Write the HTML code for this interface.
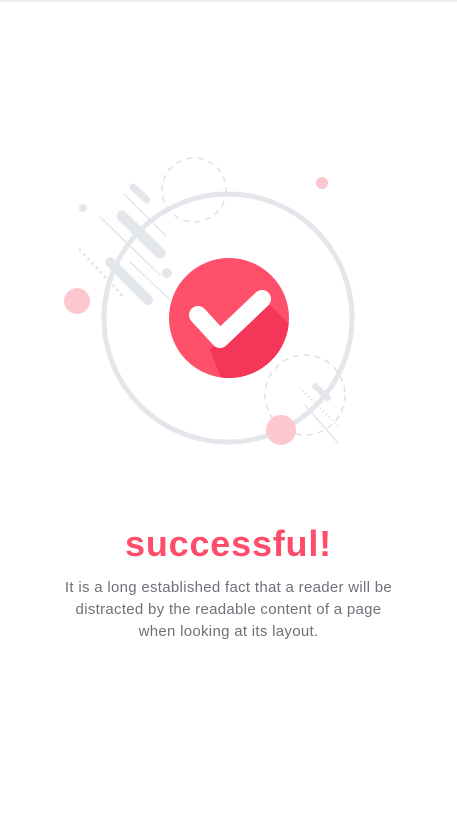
<!DOCTYPE html>
<html><head><style>
html,body{margin:0;padding:0;background:#fff;width:457px;height:833px;overflow:hidden}
.top{position:absolute;top:0;left:0;width:457px;height:2px;background:#f0f0f0}
h1{position:absolute;top:523px;left:0;width:457px;text-align:center;margin:0;font:bold 36px "Liberation Sans",sans-serif;color:#fe4c6a;letter-spacing:0.8px}
p{position:absolute;top:577px;left:0;width:457px;text-align:center;margin:0;font:15px/22px "Liberation Sans",sans-serif;color:#6d7179;letter-spacing:0.3px}
</style></head><body>
<div class="top"></div>
<svg width="457" height="833" style="position:absolute;top:0;left:0">
<defs><clipPath id="c"><circle cx="229" cy="318" r="60"/></clipPath></defs>
<circle cx="228" cy="318" r="124" fill="none" stroke="#e3e6ea" stroke-width="5"/>
<circle cx="194" cy="190" r="32" fill="none" stroke="#dde0e4" stroke-width="1.5" stroke-dasharray="6 5"/>
<circle cx="305" cy="395" r="40" fill="none" stroke="#dde0e4" stroke-width="1.5" stroke-dasharray="6 5"/>
<g stroke="#e3e6ea" stroke-linecap="round">
<line x1="133" y1="187" x2="147" y2="200" stroke-width="7"/>
<line x1="122" y1="216" x2="160" y2="253" stroke-width="11"/>
<line x1="110" y1="262" x2="148" y2="300" stroke-width="10"/>
<line x1="125" y1="195" x2="165" y2="235" stroke-width="1.5"/>
<line x1="100" y1="217" x2="160" y2="275" stroke-width="1.5"/>
<line x1="130" y1="262" x2="170" y2="300" stroke-width="1.5"/>
<line x1="80" y1="250" x2="122" y2="295" stroke-width="3" stroke-dasharray="0.1 6"/>
<line x1="315" y1="386" x2="328" y2="398" stroke-width="6"/>
<line x1="300" y1="388" x2="340" y2="428" stroke-width="2" stroke-dasharray="0.1 4"/>
<line x1="305" y1="405" x2="338" y2="443" stroke-width="1.5"/>
</g>
<circle cx="83" cy="208" r="4" fill="#e3e6ea"/>
<circle cx="167" cy="273" r="5" fill="#e3e6ea"/>
<circle cx="322" cy="183" r="6" fill="#fdc7d0"/>
<circle cx="77" cy="301" r="13" fill="#fdc7d0"/>
<circle cx="281" cy="430" r="15" fill="#fdc7d0"/>
<circle cx="229" cy="318" r="60" fill="#fe4f6b"/>
<polygon clip-path="url(#c)" points="262,297 270,305 330,365 290,420 230,400 210,350" fill="#f43659"/>
<polyline points="198,315 220,339 262,299" fill="none" stroke="#fff" stroke-width="18" stroke-linecap="round" stroke-linejoin="round"/>
</svg>
<h1>successful!</h1>
<p>It is a long established fact that a reader will be<br>distracted by the readable content of a page<br>when looking at its layout.</p>
</body></html>
